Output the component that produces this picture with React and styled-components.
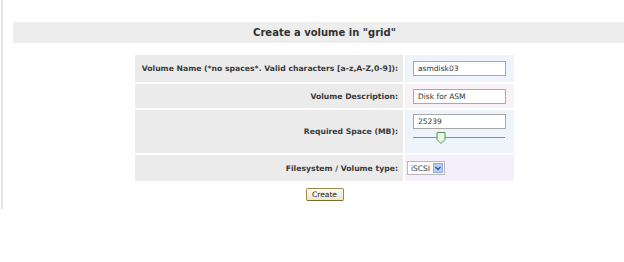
import React from "react";
import styled, { createGlobalStyle } from "styled-components";

const Global = createGlobalStyle`
  html, body { margin: 0; padding: 0; background: #ffffff; overflow: hidden; }
  body { font-family: "DejaVu Sans", Verdana, sans-serif; color: #333; }
`;

const Page = styled.div`
  margin-left: 1px;
  border-left: 2px solid #e4e4e4;
  height: 209px;
  padding: 22px 0 0 10px;
  box-sizing: border-box;
`;

const Content = styled.div`
  width: 623px;
`;

const Header = styled.h1`
  margin: 0;
  height: 21px;
  line-height: 21px;
  background: #ededed;
  text-align: center;
  font-size: 10px;
  font-weight: bold;
  color: #333;
`;

const Form = styled.div`
  display: grid;
  grid-template-columns: 268px 109px;
  grid-template-rows: 27px 24px 43px 26px;
  gap: 2px;
  width: 379px;
  margin: 12px auto 0;
`;

const Label = styled.div`
  background: #ebebeb;
  display: flex;
  align-items: center;
  justify-content: flex-end;
  padding-right: 5px;
  font-size: 7.7px;
  font-weight: bold;
  color: #3a3a3a;
  white-space: nowrap;
`;

const Value = styled.div`
  background: ${(p) => p.$bg};
  display: flex;
  flex-direction: column;
  justify-content: ${(p) => (p.$top ? "flex-start" : "center")};
  padding: ${(p) => (p.$top ? "4px 0 0 8px" : "0 0 0 8px")};
  box-sizing: border-box;
`;

const TextBox = styled.div`
  width: 93px;
  height: 15px;
  box-sizing: border-box;
  border: 1px solid #a9a9a9;
  background: #fff;
  font-size: 7.5px;
  line-height: 13px;
  padding-left: 4px;
  color: #333;
`;

const Slider = styled.div`
  position: relative;
  width: 92px;
  height: 13px;
  margin-top: 3px;
`;

const Track = styled.div`
  position: absolute;
  left: 0;
  right: 0;
  top: 5px;
  height: 1px;
  background: #8c8c8c;
`;

const Thumb = styled.svg`
  position: absolute;
  left: 23px;
  top: 0;
`;

const Select = styled.div`
  margin-left: -6px;
  width: 38px;
  height: 14px;
  box-sizing: border-box;
  border: 1px solid #b8b8b8;
  background: #fff;
  display: flex;
  align-items: center;
  justify-content: space-between;
  padding: 0 1px 0 3px;
  font-size: 7.5px;
  color: #333;
`;

const Arrow = styled.span`
  width: 10px;
  height: 10px;
  background: #b9cdf2;
  border: 1px solid #8ea9e0;
  box-sizing: border-box;
  display: flex;
  align-items: center;
  justify-content: center;
`;

const Actions = styled.div`
  display: flex;
  justify-content: center;
  margin-top: 7px;
`;

const Button = styled.button`
  width: 38px;
  height: 13px;
  padding: 0;
  box-sizing: border-box;
  border: 1px solid #9a8a4a;
  border-bottom-color: #7d6b2a;
  border-radius: 2px;
  background: linear-gradient(#fffdf4, #ece6cc);
  font-family: "DejaVu Sans", Verdana, sans-serif;
  font-size: 7.5px;
  line-height: 11px;
  color: #222;
`;

export default function App() {
  return (
    <>
      <Global />
      <Page>
        <Content>
          <Header>Create a volume in "grid"</Header>
          <Form>
            <Label>Volume Name (*no spaces*. Valid characters [a-z,A-Z,0-9]):</Label>
            <Value $bg="#eef4fb">
              <TextBox>asmdisk03</TextBox>
            </Value>
            <Label>Volume Description:</Label>
            <Value $bg="#f8f1f8">
              <TextBox>Disk for ASM</TextBox>
            </Value>
            <Label>Required Space (MB):</Label>
            <Value $bg="#eef4fb" $top>
              <TextBox>25239</TextBox>
              <Slider>
                <Track />
                <Thumb width="10" height="12" viewBox="0 0 10 12">
                  <path d="M1 0.5 H9 V7.5 L5 11.5 L1 7.5 Z" fill="#eef7e8" stroke="#4f9a52" strokeWidth="1" />
                </Thumb>
              </Slider>
            </Value>
            <Label>Filesystem / Volume type:</Label>
            <Value $bg="#f5eefb">
              <Select>
                iSCSI
                <Arrow>
                  <svg width="6" height="5" viewBox="0 0 6 5">
                    <path d="M0.5 1 L3 3.5 L5.5 1" fill="none" stroke="#2a4fa8" strokeWidth="1.3" />
                  </svg>
                </Arrow>
              </Select>
            </Value>
          </Form>
          <Actions>
            <Button>Create</Button>
          </Actions>
        </Content>
      </Page>
    </>
  );
}
